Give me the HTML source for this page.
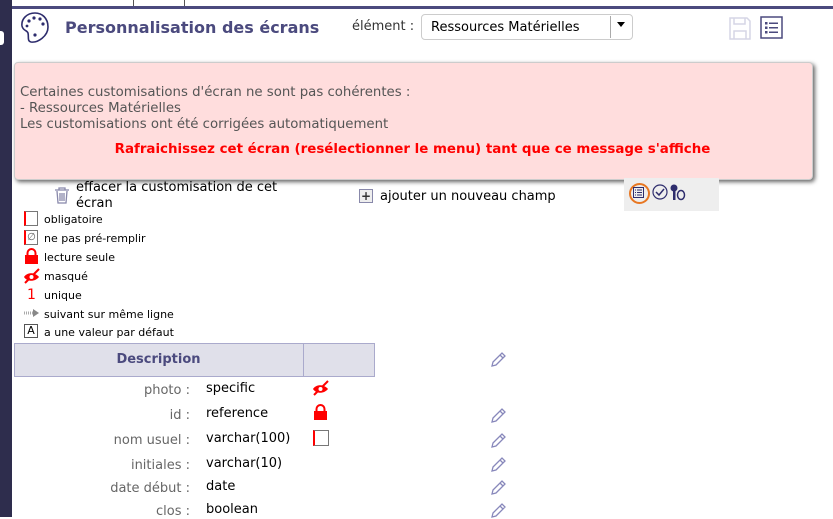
<!DOCTYPE html>
<html><head><meta charset="utf-8"><style>
body{margin:0;width:833px;height:517px;overflow:hidden;background:#fff;font-family:"DejaVu Sans",Verdana,sans-serif;position:relative}
.a{position:absolute;white-space:nowrap}
.sb{left:0;top:0;width:12px;height:517px;background:#2e2d4d}
.s{font-size:11px;color:#000}
.lbl{font-size:13px;color:#666;text-align:right;width:176px;left:14px}
.val{font-size:13px;color:#000;left:206px}
.pen{left:490px}
</style></head><body>
<div class="a sb"></div>
<div class="a" style="left:0;top:31px;width:4px;height:14px;background:#fff;border-radius:0 3px 3px 0"></div>
<div class="a" style="left:12px;top:0;width:821px;height:7px;background:#fff"></div>
<div class="a" style="left:133px;top:0;width:1px;height:6px;background:#555"></div>
<div class="a" style="left:184px;top:0;width:1px;height:6px;background:#555"></div>
<div class="a" style="left:12px;top:6px;width:821px;height:3px;background:#4b4a7e"></div>
<svg class="a" style="left:19px;top:11px" width="32" height="32" viewBox="0 0 32 32"><path d="M16 2C8 2 2 8 3 15c1 5 5 4 6 7 1 4-1 8 3 9 7 1 17-6 17-15C29 7 23 2 16 2z" fill="none" stroke="#2e2d6d" stroke-width="1.6"/><g fill="#2e2d6d"><circle cx="10" cy="10" r="1.6"/><circle cx="15" cy="7" r="1.6"/><circle cx="21" cy="8" r="1.6"/><circle cx="24" cy="13" r="1.6"/><circle cx="8" cy="15" r="1.4"/><circle cx="16" cy="24" r="1.6"/></g></svg>
<div class="a" style="left:65px;top:18px;font-size:16px;font-weight:bold;color:#4b4a7e">Personnalisation des écrans</div>
<div class="a" style="left:352px;top:19px;font-size:13px;color:#333">élément :</div>
<div class="a" style="left:421px;top:14px;width:212px;height:26px;border:1px solid #ccc;border-radius:4px;box-sizing:border-box"></div>
<div class="a" style="left:431px;top:20px;font-size:13px;color:#000">Ressources Matérielles</div>
<div class="a" style="left:610px;top:16px;width:1px;height:22px;background:#aaa"></div>
<div class="a" style="left:617px;top:22px;border:4px solid transparent;border-top:5px solid #000;border-bottom:0"></div>
<svg class="a" style="left:729px;top:17px" width="22" height="23" viewBox="0 0 22 23"><path d="M1 1h17l3 3v18H1z M5 1v6h11V1 M5 22v-8h12v8" fill="none" stroke="#d6d6e6" stroke-width="1.5"/></svg>
<svg class="a" style="left:760px;top:16px" width="23" height="23" viewBox="0 0 23 23"><rect x="1" y="1" width="21" height="21" fill="none" stroke="#4b4a7e" stroke-width="1.5"/><g fill="#4b4a7e"><rect x="5" y="6" width="2.5" height="2.5"/><rect x="5" y="10.5" width="2.5" height="2.5"/><rect x="5" y="15" width="2.5" height="2.5"/><rect x="9" y="6.5" width="9" height="1.5"/><rect x="9" y="11" width="9" height="1.5"/><rect x="9" y="15.5" width="9" height="1.5"/></g></svg>
<div class="a" style="left:14px;top:62px;width:797px;height:116px;background:#ffdddd;border:1px solid #ccc;border-radius:4px;box-shadow:2px 2px 4px #666"></div>
<div class="a" style="left:20px;top:85px;font-size:13.3px;color:#555;line-height:16px">Certaines customisations d'écran ne sont pas cohérentes :<br>- Ressources Matérielles<br>Les customisations ont été corrigées automatiquement</div>
<div class="a" style="left:14px;width:797px;top:142px;text-align:center;font-size:13.4px;font-weight:bold;color:#f00">Rafraichissez cet écran (resélectionner le menu) tant que ce message s'affiche</div>
<svg class="a" style="left:54px;top:187px" width="16" height="17" viewBox="0 0 16 17"><path d="M1 3h14M5 3V1h6v2M3 4l1 12h8l1-12M6 6v8M8 6v8M10 6v8" fill="none" stroke="#8888aa" stroke-width="1.3"/></svg>
<div class="a" style="left:76px;top:180px;font-size:13px;line-height:16px;color:#000">effacer la customisation de cet<br>écran</div>
<div class="a" style="left:359px;top:189px;width:12px;height:12px;border:1px solid #8888aa;background:#eee;font-size:12px;line-height:12px;text-align:center;font-weight:bold;color:#333">+</div>
<div class="a" style="left:380px;top:189px;font-size:13px">ajouter un nouveau champ</div>
<div class="a" style="left:624px;top:178px;width:95px;height:33px;background:#eee"></div>
<div class="a" style="left:629px;top:183px;width:17px;height:17px;border:2px solid #e87722;border-radius:50%"></div>
<svg class="a" style="left:633px;top:187px" width="11" height="11" viewBox="0 0 11 11"><rect x=".5" y=".5" width="10" height="10" fill="none" stroke="#2e2d6d"/><path d="M2 3h1M2 5.5h1M2 8h1M4 3h5M4 5.5h5M4 8h5" stroke="#2e2d6d"/></svg>
<svg class="a" style="left:652px;top:184px" width="16" height="16" viewBox="0 0 16 16"><circle cx="8" cy="8" r="7" fill="none" stroke="#2e2d6d" stroke-width="1.2"/><path d="M4 8l3 3 5-6" fill="none" stroke="#2e2d6d" stroke-width="1.5"/></svg>
<svg class="a" style="left:669px;top:183px" width="18" height="18" viewBox="0 0 18 18"><circle cx="5" cy="5" r="3.5" fill="#2e2d6d"/><rect x="4" y="7" width="2.5" height="10" fill="#2e2d6d"/><ellipse cx="12" cy="12" rx="3.5" ry="4.5" fill="none" stroke="#2e2d6d" stroke-width="1.5"/></svg>
<div class="a" style="left:24px;top:211px;width:14px;height:15px;border:1px solid #777;border-left:2px solid #f00;box-sizing:border-box"></div>
<div class="a s" style="left:44px;top:213px">obligatoire</div>
<div class="a" style="left:24px;top:230px;width:14px;height:15px;border:1px solid #777;border-left:2px solid #f00;box-sizing:border-box;font-size:10px;line-height:13px;text-align:center;color:#555">∅</div>
<div class="a s" style="left:44px;top:232px">ne pas pré-remplir</div>
<svg class="a" style="left:24px;top:248px" width="15" height="16" viewBox="0 0 15 16"><path d="M3.5 7V5a4 4 0 0 1 8 0v2" fill="none" stroke="#f00" stroke-width="2"/><rect x="1" y="7" width="13" height="9" fill="#f00"/></svg>
<div class="a s" style="left:44px;top:251px">lecture seule</div>
<svg class="a" style="left:23px;top:268px" width="17" height="16" viewBox="0 0 17 16"><path d="M1 9c3-5 11-5 15 0-4 5-12 5-15 0z" fill="#f00"/><path d="M2 15L16 1" stroke="#f00" stroke-width="2"/><circle cx="8.5" cy="9" r="2" fill="#fff"/></svg>
<div class="a s" style="left:44px;top:270px">masqué</div>
<div class="a" style="left:27px;top:287px;font-size:14px;color:#f00">1</div>
<div class="a s" style="left:44px;top:289px">unique</div>
<svg class="a" style="left:23px;top:308px" width="17" height="10" viewBox="0 0 17 10"><path d="M1 5h10" stroke="#aaa" stroke-width="3" stroke-dasharray="1 1"/><path d="M10 1l6 4-6 4z" fill="#888"/></svg>
<div class="a s" style="left:44px;top:308px">suivant sur même ligne</div>
<div class="a" style="left:24px;top:324px;width:14px;height:14px;border:1px solid #555;box-sizing:border-box;font-size:11px;line-height:12px;text-align:center">A</div>
<div class="a s" style="left:44px;top:326px">a une valeur par défaut</div>
<div class="a" style="left:14px;top:343px;width:361px;height:34px;background:#e0e0ea;border:1px solid #aaaacc;box-sizing:border-box"></div>
<div class="a" style="left:303px;top:343px;width:1px;height:34px;background:#aaaacc"></div>
<div class="a" style="left:14px;width:289px;top:352px;text-align:center;font-size:13px;font-weight:bold;color:#4b4a7e">Description</div>
<div class="a lbl" style="top:383px">photo :</div><div class="a val" style="top:381px">specific</div>
<svg class="a" style="left:312px;top:380px" width="17" height="16" viewBox="0 0 17 16"><path d="M1 9c3-5 11-5 15 0-4 5-12 5-15 0z" fill="#f00"/><path d="M2 15L16 1" stroke="#f00" stroke-width="2"/><circle cx="8.5" cy="9" r="2" fill="#fff"/></svg>
<div class="a lbl" style="top:408px">id :</div><div class="a val" style="top:406px">reference</div>
<svg class="a" style="left:313px;top:404px" width="15" height="16" viewBox="0 0 15 16"><path d="M3.5 7V5a4 4 0 0 1 8 0v2" fill="none" stroke="#f00" stroke-width="2"/><rect x="1" y="7" width="13" height="9" fill="#f00"/></svg>
<div class="a lbl" style="top:433px">nom usuel :</div><div class="a val" style="top:431px">varchar(100)</div>
<div class="a" style="left:313px;top:430px;width:16px;height:16px;border:1px solid #777;border-left:2px solid #f00;box-sizing:border-box"></div>
<div class="a lbl" style="top:458px">initiales :</div><div class="a val" style="top:456px">varchar(10)</div>
<div class="a lbl" style="top:481px">date début :</div><div class="a val" style="top:479px">date</div>
<div class="a lbl" style="top:504px">clos :</div><div class="a val" style="top:502px">boolean</div>
<svg class="a pen" style="top:351px" width="17" height="17" viewBox="0 0 17 17"><path d="M2 15l1-4 9-9 3 3-9 9z M10 4l3 3" fill="none" stroke="#8888bb" stroke-width="1.3"/></svg>
<svg class="a pen" style="top:407px" width="17" height="17" viewBox="0 0 17 17"><path d="M2 15l1-4 9-9 3 3-9 9z M10 4l3 3" fill="none" stroke="#8888bb" stroke-width="1.3"/></svg>
<svg class="a pen" style="top:432px" width="17" height="17" viewBox="0 0 17 17"><path d="M2 15l1-4 9-9 3 3-9 9z M10 4l3 3" fill="none" stroke="#8888bb" stroke-width="1.3"/></svg>
<svg class="a pen" style="top:456px" width="17" height="17" viewBox="0 0 17 17"><path d="M2 15l1-4 9-9 3 3-9 9z M10 4l3 3" fill="none" stroke="#8888bb" stroke-width="1.3"/></svg>
<svg class="a pen" style="top:479px" width="17" height="17" viewBox="0 0 17 17"><path d="M2 15l1-4 9-9 3 3-9 9z M10 4l3 3" fill="none" stroke="#8888bb" stroke-width="1.3"/></svg>
<svg class="a pen" style="top:502px" width="17" height="17" viewBox="0 0 17 17"><path d="M2 15l1-4 9-9 3 3-9 9z M10 4l3 3" fill="none" stroke="#8888bb" stroke-width="1.3"/></svg>
</body></html>
